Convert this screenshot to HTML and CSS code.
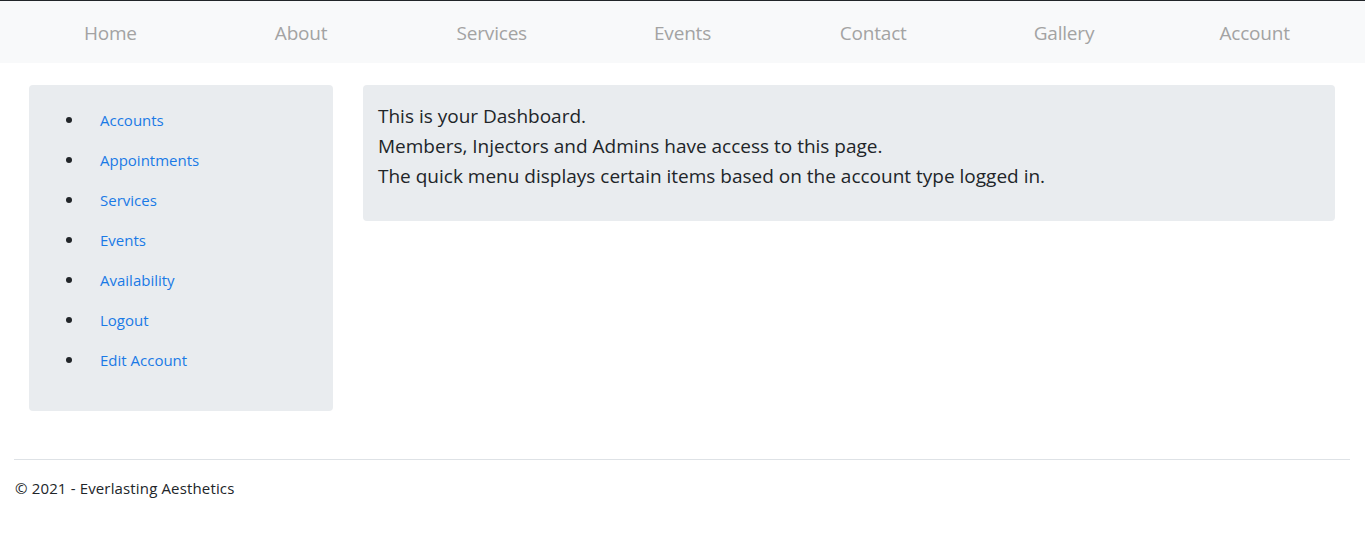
FILE: index.html
```html
<!DOCTYPE html>
<html lang="en">
<head>
<meta charset="utf-8">
<title>Dashboard - Everlasting Aesthetics</title>
<link rel="stylesheet" href="styles.css">
</head>
<body>
<header class="topbar">
  <nav class="nav">
    <a class="nav-link" href="#">Home</a>
    <a class="nav-link" href="#">About</a>
    <a class="nav-link" href="#">Services</a>
    <a class="nav-link" href="#">Events</a>
    <a class="nav-link" href="#">Contact</a>
    <a class="nav-link" href="#">Gallery</a>
    <a class="nav-link" href="#">Account</a>
  </nav>
</header>
<main class="main">
  <aside class="sidebar">
    <ul class="quick-menu">
      <li><a href="#">Accounts</a></li>
      <li><a href="#">Appointments</a></li>
      <li><a href="#">Services</a></li>
      <li><a href="#">Events</a></li>
      <li><a href="#">Availability</a></li>
      <li><a href="#">Logout</a></li>
      <li><a href="#">Edit Account</a></li>
    </ul>
  </aside>
  <section class="panel">
    <p>This is your Dashboard.</p>
    <p>Members, Injectors and Admins have access to this page.</p>
    <p>The quick menu displays certain items based on the account type logged in.</p>
  </section>
</main>
<footer class="footer">
  <div class="footer-text">&copy; 2021 - Everlasting Aesthetics</div>
</footer>
</body>
</html>
```
FILE: styles.css
```css
* { box-sizing: border-box; }
html, body { margin: 0; padding: 0; }
body {
  font-family: "Open Sans", "Noto Sans", sans-serif;
  color: #212529;
  background: #fff;
  font-size: 16px;
}
.topbar {
  border-top: 1px solid #212529;
  background: #f8f9fa;
  height: 63px;
  padding: 2px 15px 0;
}
.nav {
  display: flex;
  height: 100%;
  align-items: center;
}
.nav-link {
  flex: 1 1 0;
  text-align: center;
  font-size: 19px;
  color: #a3a3a3;
  text-decoration: none;
  letter-spacing: -0.2px;
}
.main {
  display: flex;
  gap: 30px;
  padding: 22px 30px 0 29px;
  align-items: flex-start;
}
.sidebar {
  width: 304px;
  flex: none;
  background: #e9ecef;
  border-radius: 4px;
  padding: 20px 0 26px;
}
.quick-menu {
  margin: 0;
  padding: 0 0 0 37px;
  list-style: none;
}
.quick-menu li {
  display: flex;
  align-items: center;
  height: 40px;
  padding-bottom: 10px;
  font-size: 15px;
}
.quick-menu li::before {
  content: "";
  width: 6px;
  height: 6px;
  border-radius: 50%;
  background: #212529;
  margin-right: 28px;
  flex: none;
}
.quick-menu a {
  color: #1a7ae6;
  text-decoration: none;
}
.panel {
  flex: 1;
  background: #e9ecef;
  border-radius: 4px;
  padding: 16px 15px 30px;
  min-height: 136px;
}
.panel p {
  margin: 0;
  font-size: 19px;
  line-height: 30px;
}
.footer {
  margin: 48px 15px 0 14px;
  border-top: 1px solid #dee2e6;
  padding-top: 16px;
}
.footer-text {
  font-size: 15px;
  line-height: 24px;
  padding-left: 1px;
  letter-spacing: 0.15px;
}
```
